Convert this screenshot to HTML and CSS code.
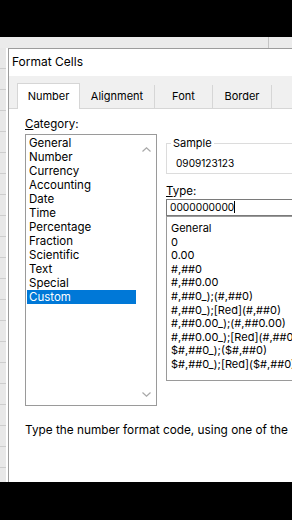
FILE: index.html
```html
<!DOCTYPE html>
<html lang="en">
<head>
    <meta charset="UTF-8">
    <meta name="viewport" content="width=device-width, initial-scale=1.0">
    <title>Format Cells</title>
    <link rel="stylesheet" href="styles.css">
</head>
<body>
    <div class="bar-top"></div>

    <div class="sheet">
        <!-- column header strip of the worksheet behind the dialog -->
        <div class="col-head">
            <div class="col-cell"></div>
            <div class="col-cell last"></div>
        </div>

        <div class="sheet-body">
            <div class="row-gutter"></div>

            <div class="dialog">
                <div class="dlg-title">Format Cells</div>

                <div class="tabs">
                    <div class="tab active tab-number">Number</div>
                    <div class="tab tab-align">Alignment</div>
                    <div class="tab tab-font">Font</div>
                    <div class="tab tab-border">Border</div>
                    <div class="tab tab-more"></div>
                </div>

                <div class="panel">
                    <div class="col-left">
                        <div class="label"><u>C</u>ategory:</div>
                        <div class="cat-box">
                            <ul class="cat-list">
                                <li>General</li>
                                <li>Number</li>
                                <li>Currency</li>
                                <li>Accounting</li>
                                <li>Date</li>
                                <li>Time</li>
                                <li>Percentage</li>
                                <li>Fraction</li>
                                <li>Scientific</li>
                                <li>Text</li>
                                <li>Special</li>
                                <li class="selected">Custom</li>
                            </ul>
                            <div class="scroll">
                                <svg width="9" height="5" viewBox="0 0 9 5"><path d="M0.5 4.5 L4.5 0.8 L8.5 4.5" fill="none" stroke="#a8a8a8" stroke-width="1.2"/></svg>
                                <svg width="9" height="5" viewBox="0 0 9 5"><path d="M0.5 0.5 L4.5 4.2 L8.5 0.5" fill="none" stroke="#a8a8a8" stroke-width="1.2"/></svg>
                            </div>
                        </div>
                    </div>

                    <div class="col-right">
                        <fieldset class="sample">
                            <legend>Sample</legend>
                            <div class="sample-value">0909123123</div>
                        </fieldset>
                        <div class="label type-label"><u>T</u>ype:</div>
                        <div class="type-input">0000000000<span class="caret"></span></div>
                        <ul class="type-list">
                            <li>General</li>
                            <li>0</li>
                            <li>0.00</li>
                            <li>#,##0</li>
                            <li>#,##0.00</li>
                            <li>#,##0_);(#,##0)</li>
                            <li>#,##0_);[Red](#,##0)</li>
                            <li>#,##0.00_);(#,##0.00)</li>
                            <li>#,##0.00_);[Red](#,##0.00)</li>
                            <li>$#,##0_);($#,##0)</li>
                            <li>$#,##0_);[Red]($#,##0)</li>
                        </ul>
                    </div>
                </div>

                <p class="hint">Type the number format code, using one of the</p>
            </div>
        </div>
    </div>

    <div class="bar-bottom"></div>
</body>
</html>
```

FILE: styles.css
```css
:root {
    --text-color: #000;
    --line-color: #d6d6d6;
    --box-border: #9a9a9a;
    --select-color: #0078d7;
}
* {
    box-sizing: border-box;
}
body, html {
    margin: 0;
    padding: 0;
    background: #000;
}
body {
    width: 292px;
    height: 520px;
    overflow: hidden;
    font-family: Inter, 'Open Sans', Arial, sans-serif;
    font-size: 11.5px;
    color: var(--text-color);
}
.bar-top {
    height: 37px;
    background: #000;
}
.bar-bottom {
    height: 38px;
    background: #000;
}
.sheet {
    height: 445px;
    background: #fff;
    display: flex;
    flex-direction: column;
    overflow: hidden;
}
.col-head {
    height: 11px;
    flex: none;
    display: flex;
    background: #ebebeb;
}
.col-cell {
    width: 269px;
    border-right: 1px solid #c4c4c4;
}
.col-cell.last {
    flex: 1;
    border-right: none;
}
.sheet-body {
    flex: 1;
    display: flex;
    min-height: 0;
}
.row-gutter {
    width: 8px;
    flex: none;
    border-right: 2px solid #fff;
    background: repeating-linear-gradient(to bottom, #e8e8e8 0 20px, #cdcdcd 20px 21px);
}
.dialog {
    width: 330px;
    flex: none;
    background: #fff;
    border-top: 1px solid #9c9c9c;
    border-left: 1px solid #9c9c9c;
}
.dlg-title {
    height: 27px;
    line-height: 25px;
    padding-left: 3px;
    font-size: 12px;
}
.tabs {
    height: 33px;
    display: flex;
    align-items: flex-end;
    padding-left: 8px;
    background: #f0f0f0;
    border-bottom: 1px solid var(--line-color);
}
.tab {
    height: 23px;
    line-height: 22px;
    text-align: center;
    font-size: 11px;
    border-right: 1px solid var(--line-color);
}
.tab.active {
    height: 26px;
    line-height: 25px;
    margin-bottom: -1px;
    background: #fff;
    border: 1px solid var(--line-color);
    border-bottom: none;
}
.tab-number { width: 63px; }
.tab-align { width: 75px; }
.tab-font { width: 58px; }
.tab-border { width: 59px; }
.tab-more { flex: 1; border-right: none; }
.panel {
    display: flex;
    gap: 9px;
    padding: 8px 0 0 16px;
}
.label {
    line-height: 14px;
}
.col-left {
    width: 132px;
    flex: none;
}
.col-left .label {
    margin-bottom: 3px;
}
.cat-box {
    height: 272px;
    display: flex;
    border: 1px solid var(--box-border);
}
.cat-list {
    width: 110px;
    list-style: none;
    margin: 0;
    padding: 1px 0 0 1px;
}
.cat-list li {
    height: 14px;
    line-height: 14px;
    padding-left: 2px;
}
.cat-list li.selected {
    background: var(--select-color);
    color: #fff;
}
.scroll {
    flex: 1;
    display: flex;
    flex-direction: column;
    justify-content: space-between;
    align-items: center;
    padding: 12px 0 8px;
}
.scroll svg {
    display: block;
}
.col-right {
    width: 160px;
    flex: none;
    margin-top: 19px;
}
.sample {
    margin: 0;
    padding: 6px 0 3px 9px;
    border: 1px solid #dcdcdc;
    font-size: 10.1px;
}
.sample legend {
    padding: 0 2px;
    margin-left: -5px;
    line-height: 14px;
    font-size: 11px;
}
.sample-value {
    line-height: 14px;
}
.type-label {
    margin-top: 10px;
    margin-bottom: 1px;
}
.type-input {
    height: 17px;
    line-height: 15px;
    padding-left: 3px;
    border: 1px solid #7a7a7a;
    font-size: 10.2px;
    white-space: nowrap;
}
.caret {
    display: inline-block;
    width: 1px;
    height: 12px;
    background: #000;
    vertical-align: -2px;
}
.type-list {
    height: 165px;
    margin: 0;
    padding: 5px 0 0 4px;
    list-style: none;
    border: 1px solid var(--box-border);
    font-size: 11px;
    white-space: nowrap;
}
.type-list li {
    height: 13.6px;
    line-height: 13.6px;
}
.hint {
    margin: 16px 0 0 16px;
    line-height: 16px;
    font-size: 11.8px;
    white-space: nowrap;
}
```
